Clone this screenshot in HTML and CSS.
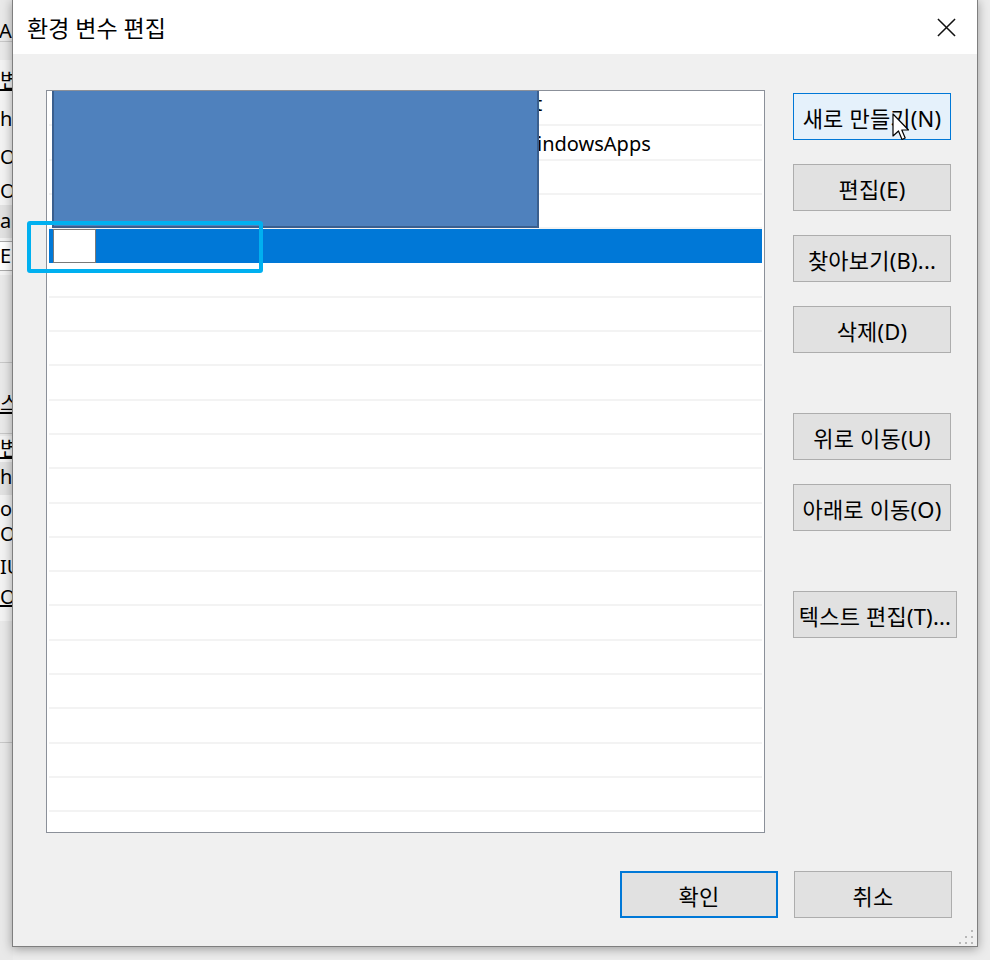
FILE: index.html
```html
<!DOCTYPE html>
<html lang="ko">
<head>
<meta charset="utf-8">
<title>환경 변수 편집</title>
<link rel="stylesheet" href="styles.css">
</head>
<body>
<div class="desktop">
  <div class="behind">
    <div class="bh-top"><span class="bh-t t1">AR</span></div>
    <div class="bh-pane p1">
      <span class="bh-t t2 ul">변:</span>
      <span class="bh-t t3">h</span>
      <span class="bh-t t4">Or</span>
      <span class="bh-t t5">Or</span>
      <span class="bh-row r1"><span class="bh-t">a</span></span>
      <span class="bh-box"><span class="bh-t">E</span></span>
    </div>
    <div class="bh-mid"><span class="bh-t t6 ul">스</span></div>
    <div class="bh-pane p2">
      <span class="bh-t t7 ul">변:</span>
      <span class="bh-row r2"><span class="bh-t">h</span></span>
      <span class="bh-t t8">o</span>
      <span class="bh-t t9">Or</span>
      <span class="bh-t t10">IU</span>
      <span class="bh-t t11 ul">OS</span>
    </div>
    <div class="bh-line"></div>
  </div>

  <div class="dialog">
    <div class="titlebar">
      <span class="title">환경 변수 편집</span>
      <svg class="close" width="20" height="20" viewBox="0 0 20 20"><path d="M1 1 L19 19 M19 1 L1 19" stroke="#111" stroke-width="1.6" fill="none"/></svg>
    </div>
    <div class="body">
      <div class="main">
        <div class="listbox">
          <div class="row"><span class="frag">t</span></div>
          <div class="row"><span class="path">indowsApps</span></div>
          <div class="row"></div>
          <div class="row"></div>
          <div class="row selected"><span class="editbox"></span></div>
          <div class="row"></div>
          <div class="row"></div>
          <div class="row"></div>
          <div class="row"></div>
          <div class="row"></div>
          <div class="row"></div>
          <div class="row"></div>
          <div class="row"></div>
          <div class="row"></div>
          <div class="row"></div>
          <div class="row"></div>
          <div class="row"></div>
          <div class="row"></div>
          <div class="row"></div>
          <div class="row"></div>
          <div class="row"></div>
          <div class="row"></div>
          <div class="redact"></div>
        </div>
        <div class="buttons">
          <button class="btn hover">새로 만들기(N)</button>
          <button class="btn">편집(E)</button>
          <button class="btn">찾아보기(B)...</button>
          <button class="btn">삭제(D)</button>
          <button class="btn gap">위로 이동(U)</button>
          <button class="btn">아래로 이동(O)</button>
          <button class="btn gap wide">텍스트 편집(T)...</button>
        </div>
      </div>
      <div class="footer">
        <button class="btn default">확인</button>
        <button class="btn">취소</button>
      </div>
    </div>
    <svg class="grip" width="16" height="16" viewBox="0 0 16 16">
      <g fill="#b8b8b8">
        <rect x="13" y="1" width="2" height="2"/>
        <rect x="13" y="7" width="2" height="2"/>
        <rect x="7" y="7" width="2" height="2"/>
        <rect x="13" y="13" width="2" height="2"/>
        <rect x="7" y="13" width="2" height="2"/>
        <rect x="1" y="13" width="2" height="2"/>
      </g>
    </svg>
  </div>

  <div class="highlight"></div>
  <svg class="cursor" width="20" height="30" viewBox="0 0 20 30">
    <path d="M1 1 L1 23 L6.5 18 L10 26.5 L13.2 25 L9.8 17 L16.5 17 Z" fill="#fff" stroke="#000" stroke-width="1.2" stroke-linejoin="round"/>
  </svg>
</div>
</body>
</html>
```

FILE: styles.css
```css
* { box-sizing: border-box; }
html, body { margin: 0; padding: 0; }
body {
  width: 990px;
  height: 960px;
  overflow: hidden;
  background: #ececec;
  font-family: "Noto Sans", "Noto Sans CJK KR", sans-serif;
  color: #000;
}
.desktop { position: relative; width: 990px; height: 960px; }

/* window behind the dialog */
.behind {
  position: absolute; left: 0; top: 0; width: 13px; height: 960px;
  overflow: hidden; background: #e9e9e9;
}
.bh-t { position: absolute; left: 0; font-size: 20px; line-height: 22px; white-space: nowrap; }
.bh-t.ul { text-decoration: underline; }
.bh-top { position: absolute; left: 0; top: 0; width: 13px; height: 42px; border-bottom: 1px solid #c8c8c8; }
.t1 { top: 20px; left: -1px; }
.bh-pane { position: absolute; left: 0; width: 13px; background: #f3f3f3; }
.p1 { top: 60px; height: 215px; }
.t2 { top: 10px; }
.t3 { top: 48px; }
.t4 { top: 86px; }
.t5 { top: 120px; }
.bh-row { position: absolute; left: 0; width: 13px; height: 33px; background: #e2e2e2; }
.r1 { top: 145px; }
.r1 .bh-t { top: 5px; }
.bh-box { position: absolute; left: 0; top: 181px; width: 13px; height: 30px; background: #fff; border-top: 1px solid #aaa; border-bottom: 1px solid #aaa; }
.bh-box .bh-t { top: 3px; }
.bh-mid { position: absolute; left: 0; top: 362px; width: 13px; height: 72px; border-top: 1px solid #c8c8c8; border-bottom: 1px solid #c8c8c8; }
.t6 { top: 30px; }
.p2 { top: 436px; height: 185px; }
.t7 { top: 2px; }
.r2 { top: 26px; }
.r2 .bh-t { top: 4px; }
.t8 { top: 62px; }
.t9 { top: 87px; }
.t10 { top: 120px; }
.t11 { top: 150px; }
.bh-line { position: absolute; left: 0; top: 742px; width: 13px; height: 1px; background: #c8c8c8; }

/* dialog */
.dialog {
  position: absolute; left: 12px; top: -1px;
  width: 966px; height: 948px;
  background: #f0f0f0;
  border: 1px solid #7f7f7f;
  box-shadow: 0 2px 10px rgba(0,0,0,0.35);
  display: flex; flex-direction: column;
}
.titlebar {
  height: 54px; background: #fff;
  display: flex; align-items: center; justify-content: space-between;
  padding: 0 21px 0 14px;
}
.title { font-size: 23px; margin-top: -1px; }
.close { display: block; width: 19px; height: 19px; }
.body { flex: 1; padding: 36px 0 0 33px; display: flex; flex-direction: column; }
.main { display: flex; align-items: flex-start; }
.listbox {
  position: relative;
  width: 719px; height: 743px;
  background: #fff;
  border: 1px solid #8b9099;
  padding: 1px 2px;
  overflow: hidden;
}
.row {
  position: relative;
  height: 34.3px;
  border-bottom: 2px solid #f3f3f3;
  font-size: 20px;
  line-height: 32px;
  white-space: nowrap;
}
.frag { position: absolute; left: 486px; top: -4px; }
.path { position: absolute; left: 488px; top: 2px; }
.row.selected { background: #0078d7; border-bottom-color: #0078d7; }
.editbox {
  position: absolute; left: 4px; top: 0; width: 43px; height: 34px;
  background: #fff; border: 1px solid #7a7a7a;
}
.redact {
  position: absolute; left: 5px; top: -2px; width: 487px; height: 139px;
  background: #4f81bd; border: 2px solid #3a5f8e;
}
.buttons { display: flex; flex-direction: column; gap: 24px; margin-left: 28px; margin-top: 3px; }
.btn {
  width: 158px; height: 47px;
  background: #e1e1e1;
  border: 1px solid #adadad;
  font-family: "Noto Sans", "Noto Sans CJK KR", sans-serif;
  font-size: 22px; color: #000;
  padding: 0; margin: 0;
  white-space: nowrap;
  letter-spacing: 0.2px;
}
.btn.hover { background: #e5f1fb; border-color: #0078d7; }
.btn.gap { margin-top: 36px; }
.btn.wide { width: 164px; }
.btn.default { border: 2px solid #0078d7; }
.footer { display: flex; justify-content: flex-end; gap: 16px; margin-top: 38px; padding-right: 25px; }
.grip { position: absolute; right: 3px; bottom: 1px; }

.highlight {
  position: absolute; left: 27px; top: 221px; width: 236px; height: 52px;
  border: 4px solid #00b0f0; border-radius: 3px;
}
.cursor { position: absolute; left: 892px; top: 113px; }
```
